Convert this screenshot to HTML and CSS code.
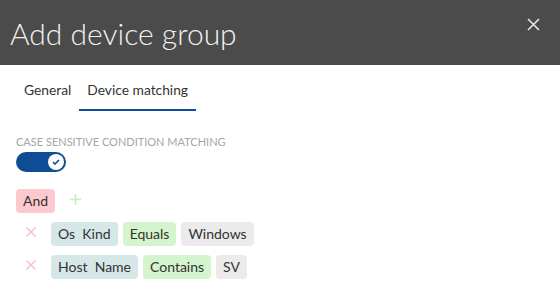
FILE: index.html
```html
<!DOCTYPE html>
<html>

<head>
    <title>Add device group</title>
    <link rel="stylesheet" href="styles.css">
</head>

<body>
    <div class="dialog">
        <div class="dialog-header">
            <h1>Add device group</h1>
            <svg class="close" width="13" height="13" viewBox="0 0 13 13">
                <path d="M1 1 L12 12 M12 1 L1 12" stroke="#ececec" stroke-width="1.5" />
            </svg>
        </div>

        <div class="dialog-body">
            <div class="tabs">
                <span class="tab">General</span>
                <span class="tab active">Device matching</span>
            </div>

            <div class="field-label">CASE SENSITIVE CONDITION MATCHING</div>
            <div class="toggle">
                <span class="knob">
                    <svg width="8" height="6" viewBox="0 0 8 6">
                        <path d="M1 3 L3 5 L7 1" fill="none" stroke="#0f4c96" stroke-width="1.6" />
                    </svg>
                </span>
            </div>

            <div class="group-row">
                <span class="chip chip-and">And</span>
                <svg class="add" width="11" height="11" viewBox="0 0 11 11">
                    <path d="M5.5 0 V11 M0 5.5 H11" stroke="#c5ecbc" stroke-width="1.5" />
                </svg>
            </div>

            <div class="condition">
                <span class="remove">
                    <svg width="10" height="10" viewBox="0 0 10 10">
                        <path d="M0.5 0.5 L9.5 9.5 M9.5 0.5 L0.5 9.5" stroke="#f7bcc3" stroke-width="1.4" />
                    </svg>
                </span>
                <span class="chip chip-field">Os  Kind</span>
                <span class="chip chip-op">Equals</span>
                <span class="chip chip-value">Windows</span>
            </div>
            <div class="condition">
                <span class="remove">
                    <svg width="10" height="10" viewBox="0 0 10 10">
                        <path d="M0.5 0.5 L9.5 9.5 M9.5 0.5 L0.5 9.5" stroke="#f7bcc3" stroke-width="1.4" />
                    </svg>
                </span>
                <span class="chip chip-field">Host  Name</span>
                <span class="chip chip-op">Contains</span>
                <span class="chip chip-value">SV</span>
            </div>
        </div>
    </div>
</body>

</html>
```

FILE: styles.css
```css
body {
    margin: 0;
    padding: 0;
    background: #ffffff;
    font-family: 'Lato', 'Open Sans', sans-serif;
    color: #333333;
}

.dialog-header {
    height: 65px;
    background: #4b4b4b;
    display: flex;
    align-items: center;
    justify-content: space-between;
    padding: 0 20px 0 10px;
}

.dialog-header h1 {
    margin: 0;
    font-weight: 300;
    font-size: 30px;
    color: #f2f2f2;
}

.close {
    margin-top: -16px;
}

.dialog-body {
    padding: 0 16px;
}

.tabs {
    display: flex;
    margin-top: 14px;
}

.tab {
    padding: 2px 8px 11px;
    font-size: 13.8px;
    color: #333333;
    border-bottom: 2px solid transparent;
}

.tab.active {
    border-bottom-color: #0f4c96;
}

.field-label {
    margin-top: 24px;
    font-size: 11px;
    color: #a6a6a6;
}

.toggle {
    margin-top: 4px;
    width: 50px;
    height: 20px;
    border-radius: 10px;
    background: #0f4c96;
    display: flex;
    align-items: center;
    justify-content: flex-end;
    padding: 0 2px;
    box-sizing: border-box;
}

.knob {
    width: 16px;
    height: 16px;
    border-radius: 50%;
    background: #ffffff;
    display: flex;
    align-items: center;
    justify-content: center;
}

.group-row {
    margin-top: 17px;
    display: flex;
    align-items: center;
}

.chip {
    display: inline-block;
    height: 24px;
    line-height: 24px;
    padding: 0 7px;
    border-radius: 4px;
    font-size: 14px;
    color: #333333;
    white-space: pre;
}

.chip-and {
    background: #fcc9cf;
}

.add {
    margin-left: 15px;
    margin-top: -3px;
}

.condition {
    display: flex;
    align-items: center;
    gap: 5px;
    margin-top: 9px;
}

.condition:first-of-type {
    margin-top: 10px;
}

.remove {
    width: 30px;
    display: flex;
    justify-content: center;
    margin-top: -4px;
}

.chip-field {
    background: #d5e7e7;
}

.chip-op {
    background: #d4f4cd;
}

.chip-value {
    background: #ebebeb;
}
```
